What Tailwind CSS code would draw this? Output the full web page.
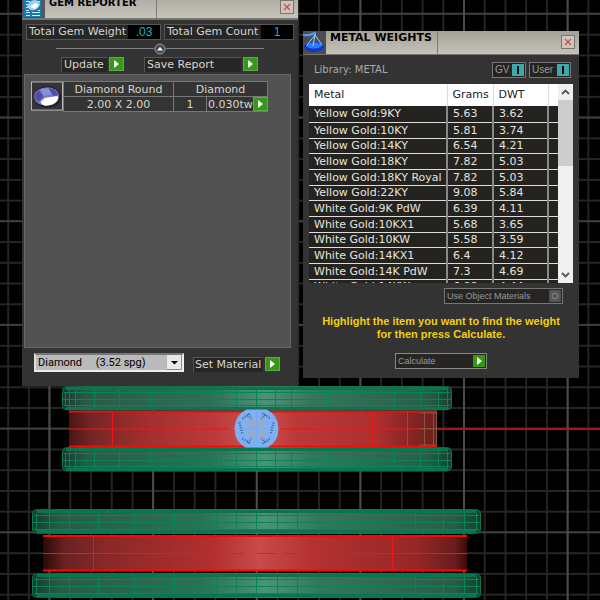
<!DOCTYPE html>
<html lang="en">
<head>
    <meta charset="UTF-8">
    <meta name="viewport" content="width=device-width, initial-scale=1.0">
    <title>Gem Reporter / Metal Weights</title>
    <script src="https://cdn.jsdelivr.net/npm/@tailwindcss/browser@4"></script>
</head>
<body class="relative min-h-screen overflow-hidden bg-black font-['DejaVu_Sans',sans-serif] text-[11px] leading-[14px] text-[#d8d4cc]">

    <!-- viewport: grid and ring model -->
    <svg class="absolute inset-0 h-full w-full" aria-hidden="true">
        <defs>
            <pattern id="minor" x="7.2" y="-7.8" width="20.72" height="20.74" patternUnits="userSpaceOnUse">
                <path d="M1 0V21M0 1H21" stroke="#262626" stroke-width="1.8"/>
            </pattern>
            <pattern id="major" x="48.4" y="12.7" width="103.65" height="103.7" patternUnits="userSpaceOnUse">
                <path d="M1 0V104" stroke="#585858" stroke-width="1.5"/>
                <path d="M0 1H104" stroke="#585858" stroke-width="1.2"/>
            </pattern>
            <linearGradient id="green">
                <stop offset="0" stop-color="#16382c"/><stop offset=".06" stop-color="#285b48"/><stop offset=".38" stop-color="#2c7056"/>
                <stop offset=".52" stop-color="#4b9279"/><stop offset=".64" stop-color="#35775d"/><stop offset=".94" stop-color="#285d49"/><stop offset="1" stop-color="#12402e"/>
            </linearGradient>
            <linearGradient id="red">
                <stop offset="0" stop-color="#2c0808"/><stop offset=".05" stop-color="#682222"/><stop offset=".15" stop-color="#8a2828"/><stop offset=".4" stop-color="#b22f2f"/>
                <stop offset=".51" stop-color="#c84a49"/><stop offset=".64" stop-color="#b43131"/><stop offset=".88" stop-color="#962727"/><stop offset=".97" stop-color="#6a1d1d"/><stop offset="1" stop-color="#400808"/>
            </linearGradient>
            <linearGradient id="redTop">
                <stop offset="0" stop-color="#4c1414"/><stop offset=".06" stop-color="#742626"/><stop offset=".2" stop-color="#a02e2e"/><stop offset=".4" stop-color="#bc3a3a"/>
                <stop offset=".51" stop-color="#cc5453"/><stop offset=".62" stop-color="#bc3838"/><stop offset=".84" stop-color="#ac2f2f"/><stop offset="1" stop-color="#6a1d1d"/>
            </linearGradient>
            <g id="rail1">
                <rect x="62" y="0" width="390" height="24.5" rx="5" fill="url(#green)"/>
                <rect x="62.500" y="1" width="389" height="22.500" rx="4" fill="none" stroke="#08764f"/>
                <path d="M64 6.500H450M63 13.500H451M64 19.500H450M65.500 6V20M69.500 3V22M75.500 2V22M94.500 2V22M119.500 2V22M150.500 2V22M185.500 2V22M221.500 2V22M236.500 2V22M256.500 2V22M275.500 2V22M291.500 2V22M328.500 2V22M363.500 2V22M394.500 2V22M420.500 2V22M438.500 2V22M447.500 4V21" stroke="#088557" fill="none"/>
                <path d="M66 2.500H448M66 22.500H448" stroke="#08764f" stroke-width="3"/>
            </g>
            <g id="rail2">
                <rect x="32" y="0" width="449" height="25" rx="5" fill="url(#green)"/>
                <rect x="32.500" y="1" width="448" height="23" rx="4" fill="none" stroke="#08764f"/>
                <path d="M34 6.500H479M33 13.500H480M34 20.500H479M36.500 4V22M49.500 2V23M69.500 2V23M98.500 2V23M134.500 2V23M174.500 2V23M216.500 2V23M236.500 2V23M256.500 2V23M277.500 2V23M297.500 2V23M339.500 2V23M379.500 2V23M415.500 2V23M443.500 2V23M464.500 2V23M476.500 4V22" stroke="#088557" fill="none"/>
                <path d="M37 2.500H476M37 22.500H476" stroke="#08764f" stroke-width="3"/>
            </g>
        </defs>
        <rect width="100%" height="100%" fill="url(#minor)"/>
        <rect width="100%" height="100%" fill="url(#major)"/>
        <rect x="437" y="428" width="100%" height="2" fill="#ab1408"/>

        <rect x="69" y="411" width="368" height="36" fill="url(#redTop)"/>
        <path d="M69 411.500H437M69 446.500H437" stroke="#fa0808" stroke-width="2"/>
        <path d="M69 429H228M280 429H437M112.500 412V446M372.500 412V446" stroke="#f01616"/>
        <path d="M407.500 412V446M424.500 412V446M433.500 412V446M436.500 412V446M419 428.500H437M419 445H437M419 413H437" stroke="#85583a"/>
        <use href="#rail1" y="386"/>
        <use href="#rail1" y="447"/>
        <g transform="translate(256.500 428.500)">
            <path d="M-10-19H10Q22-13 22 0Q22 13 11 19H-11Q-22 13-22 0Q-22-13-10-19Z" fill="#80b0f4"/>
            <path d="M-5-11H5L10-5V5L5 11H-5L-10 5V-5Z" fill="#94abd0"/>
            <path d="M-10 0H10M0-18V18M-10-5L-17-11M10-5L17-11M-10 5L-17 11M10 5L17 11" stroke="#72aaff" fill="none"/>
            <path d="M-14-10L-6-15M6-15L14-10M-14 10L-6 15M6 15L14 10M-17-6L-14 6M17-6L14 6M-9-14L-5-10M9-14L5-10M-9 14L-5 10M9 14L5 10" stroke="#45618c" stroke-width="2.500" stroke-dasharray="1 1.500" fill="none"/>
        </g>

        <rect x="43" y="536" width="424" height="35" fill="url(#red)"/>
        <path d="M43 536H467M43 570.500H467" stroke="#fa0808" stroke-width="2"/>
        <path d="M43 553.500H205M308 553.500H467M93.500 537V570M392.500 537V570" stroke="#f01616"/>
        <path d="M205 553.500H308" stroke="#f01616" stroke-dasharray="20 7 12 13"/>
        <use href="#rail2" y="509"/>
        <use href="#rail2" y="573"/>
    </svg>

    <!-- Gem Reporter -->
    <section class="absolute -top-3 left-[22px] flex h-[398px] w-[276px] flex-col bg-[#333]">
        <header class="flex h-8 border-b-2 border-[#77756c] bg-linear-to-b from-[#a3a197] to-[#c6c4ba]">
            <svg class="h-[30px] w-[23px]" viewBox="0 0 23 30" aria-hidden="true">
                <rect width="23" height="30" fill="#57575c"/>
                <rect x="2" width="17" height="29" fill="#167bb5"/>
                <path d="M4 13.500H8M10 13.500H18M4 16.500H8M4 19.500H7M4 22.500H7M4 24.500H8M10 24.500H18M4 27.500H8M10 27.500H18M16 22.500H18" stroke="#d0edf8"/>
                <path d="M5 18Q7 13 12 12Q17 12 18 16Q17 21 12 22Q7 23 5 18Z" fill="#a9cfe0"/>
                <path d="M8 19L13 15L17 17L13 21Z" fill="#fff"/>
            </svg>
            <h1 class="w-28 border-r border-[#7c7a72] pt-2 pl-1 text-[10px] font-bold text-black">GEM REPORTER</h1>
            <button class="mt-3 mr-1 ml-auto flex h-[14px] w-[14px] items-center justify-center border border-[#77756d] bg-[#cbc7bd]" aria-label="Close">
                <svg class="h-2 w-2" viewBox="0 0 8 8"><path d="M1 1L7 7M7 1L1 7" stroke="#c94b46" stroke-width="1.2"/></svg>
            </button>
        </header>

        <div class="mt-1 flex gap-[3px] px-1">
            <div class="flex h-4 w-[135px] border border-[#555] bg-[#262626]">
                <span class="grow whitespace-nowrap pl-[2px]">Total Gem Weight</span>
                <output class="w-8 bg-black text-center font-['Liberation_Sans',sans-serif] text-[12px] text-[#16b5b5]">.03</output>
            </div>
            <div class="flex h-4 w-[130px] border border-[#555] bg-[#262626]">
                <span class="grow whitespace-nowrap pl-[2px]">Total Gem Count</span>
                <output class="w-8 bg-black text-center font-['Liberation_Sans',sans-serif] text-[12px] text-[#16b5b5]">1</output>
            </div>
        </div>

        <div class="flex h-[17px] items-center justify-center">
            <span class="h-px w-[98px] bg-[#858585]"></span>
            <button aria-label="Collapse">
                <svg class="h-3 w-3" viewBox="0 0 12 12"><circle cx="6" cy="6" r="5" fill="#4a4a4a" stroke="#999"/><path d="M3 7.500L6 4L9 7.500Z" fill="#fff"/></svg>
            </button>
            <span class="h-px w-[98px] bg-[#858585]"></span>
        </div>

        <div class="flex h-[15px] gap-5 pl-[39px]">
            <button class="flex w-[63px] justify-between whitespace-nowrap">
                <span class="h-[15px] w-[46px] border-t border-l border-[#555] bg-[#262626] pl-[2px] text-left">Update</span>
                <svg class="h-[14px] w-[15px]" viewBox="0 0 15 14"><rect x=".5" y=".5" width="14" height="13" fill="#359914" stroke="#61a94d"/><path d="M5 3V11L10 7Z" fill="#fff"/></svg>
            </button>
            <button class="flex w-[114px] justify-between whitespace-nowrap">
                <span class="h-[15px] w-[97px] border-t border-l border-[#555] bg-[#262626] pl-[2px] text-left">Save Report</span>
                <svg class="h-[14px] w-[15px]" viewBox="0 0 15 14"><rect x=".5" y=".5" width="14" height="13" fill="#359914" stroke="#61a94d"/><path d="M5 3V11L10 7Z" fill="#fff"/></svg>
            </button>
        </div>

        <div class="mt-[2px] mr-[7px] ml-[2px] h-[274px] border border-[#686868] bg-[#525252] pt-[6px] pl-[6px]">
            <div class="flex h-[30px] w-[237px]">
                <svg class="h-[30px] w-[33px]" viewBox="0 0 33 30" aria-hidden="true">
                    <rect x=".5" y=".5" width="32" height="29" fill="#343434" stroke="#bbb"/>
                    <ellipse cx="17" cy="16" rx="14" ry="11" fill="#1f1f22"/>
                    <path d="M3 15Q5 7 16 6Q27 6 29 14Q29 24 17 25Q4 25 3 15Z" fill="#7479cb"/>
                    <path d="M4 14L8 9L13 15L8 21Q3 18 4 14ZM18 7L24 8L29 14L23 15Z" fill="#4b51a0"/>
                    <path d="M10 8L18 7L21 13L13 15Z" fill="#8b90dc"/>
                    <path d="M10 21L14 17L27 15Q29 16 27 20Q23 25 15 25Q10 24 10 21Z" fill="#fff"/>
                </svg>
                <table class="w-[204px] table-fixed border-collapse bg-[#343434] text-center leading-[13px]">
                    <colgroup><col class="w-[110px]"><col class="w-[33px]"><col class="w-[61px]"></colgroup>
                    <tr class="h-[15px]"><td class="border border-[#777] p-0">Diamond Round</td><td class="border border-[#777] p-0" colspan="2">Diamond</td></tr>
                    <tr class="h-[15px]">
                        <td class="border border-[#777] p-0">2.00 X 2.00</td>
                        <td class="border border-[#777] p-0">1</td>
                        <td class="border border-[#777] p-0">
                            <div class="flex items-center justify-between whitespace-nowrap"><span class="pl-px">0.030tw</span>
                                <button aria-label="Gem details"><svg class="h-[14px] w-[15px]" viewBox="0 0 15 14"><rect x=".5" y=".5" width="14" height="13" fill="#359914" stroke="#61a94d"/><path d="M5 3V11L10 7Z" fill="#fff"/></svg></button>
                            </div>
                        </td>
                    </tr>
                </table>
            </div>
        </div>

        <div class="mt-[5px] flex items-end gap-[9px] pl-3">
            <div class="relative h-[19px] w-[150px]">
                <select aria-label="Material" class="h-full w-full appearance-none border-2 border-[#eee] border-t-[#777] border-l-[#ddd] bg-[#bababa] pl-[2px] font-[Roboto,sans-serif] text-[11px] leading-[15px] text-black">
                    <option>Diamond &nbsp; &nbsp; (3.52 spg)</option>
                </select>
                <svg class="pointer-events-none absolute top-[2px] right-[2px] h-[15px] w-[15px]" viewBox="0 0 15 15"><path d="M0 0H15V15H0Z" fill="#e8e8e8"/><path d="M14.500 0V14.500H0" stroke="#888" fill="none"/><path d="M4 6H11L7.500 9.500Z"/></svg>
            </div>
            <button class="flex w-[87px] justify-between whitespace-nowrap">
                <span class="h-[15px] w-[70px] border-t border-l border-[#555] bg-[#262626] pl-px text-left">Set Material</span>
                <svg class="h-[14px] w-[15px]" viewBox="0 0 15 14"><rect x=".5" y=".5" width="14" height="13" fill="#359914" stroke="#61a94d"/><path d="M5 3V11L10 7Z" fill="#fff"/></svg>
            </button>
        </div>
    </section>

    <!-- Metal Weights -->
    <section class="absolute top-[31px] left-[303px] flex h-[347px] w-[276px] flex-col bg-[#333]">
        <header class="flex h-6 border-b border-[#77756c] bg-linear-to-b from-[#a3a197] to-[#c6c4ba]">
            <svg class="h-[23px] w-[23px]" viewBox="0 0 23 23" aria-hidden="true">
                <rect width="23" height="23" fill="#4c4d54"/>
                <ellipse cx="11" cy="16" rx="10" ry="5" fill="#1436c4"/>
                <ellipse cx="11" cy="14.500" rx="8" ry="3" fill="#2c7cff"/>
                <path d="M0 4Q6 5 12 2V5" stroke="#4d9dff" stroke-width="2" fill="none"/>
                <path d="M12 4L4 14M12 4L19 14M12 4L10 15" stroke="#a5cfff" fill="none"/>
            </svg>
            <h2 class="w-28 border-r border-[#7c7a72] pl-1 text-[11px] font-bold whitespace-nowrap text-black">METAL WEIGHTS</h2>
            <button class="mt-1 mr-1 ml-auto flex h-[14px] w-[14px] items-center justify-center border border-[#77756d] bg-[#cbc7bd]" aria-label="Close">
                <svg class="h-2 w-2" viewBox="0 0 8 8"><path d="M1 1L7 7M7 1L1 7" stroke="#c94b46" stroke-width="1.2"/></svg>
            </button>
        </header>

        <div class="flex h-6 items-end gap-[3px] pr-2 pb-px pl-[11px] text-[10px]">
            <span class="mr-auto pb-px text-[#aaa]">Library: METAL</span>
            <button class="flex h-4 w-[34px] items-center justify-between border border-[#777] bg-[#24231f] pr-px pl-[2px] font-['Liberation_Sans',sans-serif] text-[#999]">GV
                <span class="flex h-3 w-3 items-center justify-center bg-[#3baaaa]"><span class="h-2 w-[2px] bg-black"></span></span>
            </button>
            <button class="flex h-4 w-[42px] items-center justify-between border border-[#777] bg-[#24231f] pr-px pl-[2px] font-['Liberation_Sans',sans-serif] text-[#999]">User
                <span class="flex h-3 w-3 items-center justify-center bg-[#3baaaa]"><span class="h-2 w-[2px] bg-black"></span></span>
            </button>
        </div>

        <div class="mx-[6px] mt-[5px] flex h-[199px] overflow-hidden">
            <div class="h-full w-[249px] overflow-hidden">
                <table class="w-full table-fixed border-collapse text-left text-[#e5e4df]">
                    <colgroup><col class="w-[138px]"><col class="w-[46px]"><col class="w-[55px]"><col></colgroup>
                    <thead>
                        <tr class="h-[22px] bg-white text-[#222]"><th class="border-r border-[#ddd] p-0 pl-[5px] font-normal">Metal</th><th class="border-r border-[#ddd] p-0 pl-[5px] font-normal">Grams</th><th class="border-r border-[#ddd] p-0 pl-[5px] font-normal">DWT</th><th></th></tr>
                    </thead>
                    <tbody id="metals"></tbody>
                </table>
            </div>
            <div class="flex w-[15px] flex-col bg-[#f0f0f0]">
                <svg class="h-4 w-[15px]" viewBox="0 0 15 16"><path d="M4 10L7.500 6.500L11 10" stroke="#555" stroke-width="1.800" fill="none"/></svg>
                <div class="h-[66px] bg-[#cdcdcd]"></div>
                <svg class="mt-auto h-4 w-[15px]" viewBox="0 0 15 16"><path d="M4 6L7.500 9.500L11 6" stroke="#555" stroke-width="1.800" fill="none"/></svg>
            </div>
        </div>

        <button class="mt-[5px] mr-4 ml-auto flex h-4 w-[119px] items-center justify-between border border-[#777] bg-[#262522] pr-px pl-[2px] font-['Liberation_Sans',sans-serif] text-[9px] whitespace-nowrap text-[#999]">Use Object Materials
            <svg class="h-3 w-3" viewBox="0 0 12 12"><path d="M0 0H12V12H0Z" fill="#555"/><circle cx="6" cy="6" r="3" fill="none" stroke="#888"/></svg>
        </button>
        <p class="mt-[11px] text-center font-['Liberation_Sans',sans-serif] text-[11px] leading-[13px] font-bold whitespace-nowrap text-[#f2cf0b]">Highlight the item you want to find the weight<br>for then press Calculate.</p>
        <button class="mt-3 ml-[92px] flex h-4 w-[92px] items-center justify-between border border-[#888] bg-[#262522] pr-px pl-[2px] font-['Liberation_Sans',sans-serif] text-[9px] text-[#999]">Calculate
            <svg class="h-3 w-3" viewBox="0 0 12 12"><path d="M0 0H12V12H0Z" fill="#359914"/><path d="M4 2V10L9 6Z" fill="#fff"/></svg>
        </button>
    </section>

    <script>
        const metals = [
            ['Yellow Gold:9KY', '5.63', '3.62'],
            ['Yellow Gold:10KY', '5.81', '3.74'],
            ['Yellow Gold:14KY', '6.54', '4.21'],
            ['Yellow Gold:18KY', '7.82', '5.03'],
            ['Yellow Gold:18KY Royal', '7.82', '5.03'],
            ['Yellow Gold:22KY', '9.08', '5.84'],
            ['White Gold:9K PdW', '6.39', '4.11'],
            ['White Gold:10KX1', '5.68', '3.65'],
            ['White Gold:10KW', '5.58', '3.59'],
            ['White Gold:14KX1', '6.4', '4.12'],
            ['White Gold:14K PdW', '7.3', '4.69'],
            ['White Gold:14KW', '6.88', '4.44']
        ];
        // Last column is an empty filler, same as the header row
        document.getElementById('metals').innerHTML = metals.map(row => `
            <tr class="h-4 bg-[#24231f] leading-[13px] nth-[3n]:h-[15px]">
                ${[...row, ''].map(cell => `<td class="border-r-2 border-b border-r-[#888] border-b-[#ddd] p-0 pl-[5px] whitespace-nowrap last:border-r-0">${cell}</td>`).join('')}
            </tr>`).join('');
    </script>
</body>
</html>
